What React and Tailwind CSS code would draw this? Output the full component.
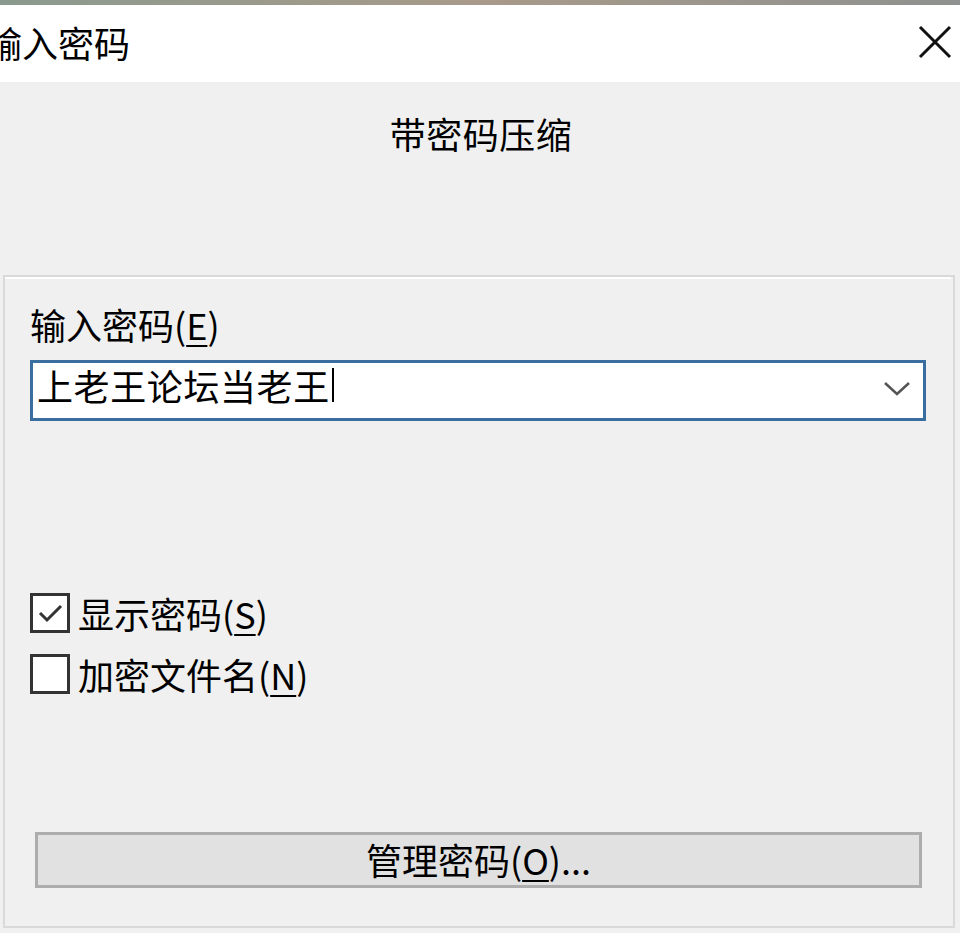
import React from "react";

const font = { fontFamily: '"Noto Sans CJK SC", "Noto Sans", sans-serif' };

function U({ children }) {
  return <span className="underline underline-offset-[5px] decoration-2">{children}</span>;
}

function Check({ checked }) {
  return (
    <div className="w-[40px] h-[40px] border-[3px] border-[#333333] bg-white flex items-center justify-center shrink-0">
      {checked && (
        <svg width="30" height="30" viewBox="0 0 30 30">
          <path d="M5 15 L12 22 L26 8" fill="none" stroke="#333" strokeWidth="3" />
        </svg>
      )}
    </div>
  );
}

export default function App() {
  return (
    <div className="w-[960px] h-[933px] bg-[#f0f0f0] flex flex-col overflow-hidden text-black" style={font}>
      <div className="h-[5px] bg-gradient-to-r from-[#8a9a8e] via-[#a89a8a] to-[#8e918f] shrink-0" />
      <div className="h-[77px] bg-white flex items-center justify-between shrink-0">
        <div className="ml-[-14px] text-[36px] leading-none -mt-[4px]">输入密码</div>
        <svg width="34" height="34" viewBox="0 0 34 34" className="mr-[8px] -mt-[4px]">
          <path d="M2 2 L32 32 M32 2 L2 32" stroke="#111" strokeWidth="3" />
        </svg>
      </div>
      <div className="h-[193px] flex justify-center pt-[33px] text-[36px] leading-none">
        <span className="ml-[2px] tracking-[0.5px]">带密码压缩</span>
      </div>
      <div className="ml-[3px] mr-[5px] h-[653px] border-2 border-[#d9d9d9] flex flex-col pl-[25px] pr-[27px]">
        <div className="border-t-2 border-white -mx-[25px]" />
        <div className="text-[36px] leading-none mt-[27px]">
          输入密码(<U>E</U>)
        </div>
        <div className="mt-[18px] h-[61px] border-[3px] border-[#3a6e9e] bg-white flex items-center justify-between pl-[4px] pr-[10px]">
          <div className="text-[36px] leading-none flex items-center tracking-[0.6px] pb-[12px]">
            上老王论坛当老王<span className="inline-block w-[2px] h-[34px] bg-black ml-[2px]" />
          </div>
          <svg width="28" height="16" viewBox="0 0 28 16" className="mr-[2px] -mt-[4px]">
            <path d="M2 2 L14 13 L26 2" fill="none" stroke="#555" strokeWidth="2.5" />
          </svg>
        </div>
        <div className="mt-[172px] flex items-center gap-[8px]">
          <Check checked />
          <span className="text-[36px] leading-none">显示密码(<U>S</U>)</span>
        </div>
        <div className="mt-[21px] flex items-center gap-[8px]">
          <Check />
          <span className="text-[36px] leading-none">加密文件名(<U>N</U>)</span>
        </div>
        <div className="mt-[138px] ml-[5px] mr-[4px] h-[56px] bg-[#e1e1e1] border-[3px] border-[#adadad] flex items-center justify-center">
          <span className="text-[36px] leading-none -mt-[2px]">管理密码(<U>O</U>)...</span>
        </div>
      </div>
    </div>
  );
}
